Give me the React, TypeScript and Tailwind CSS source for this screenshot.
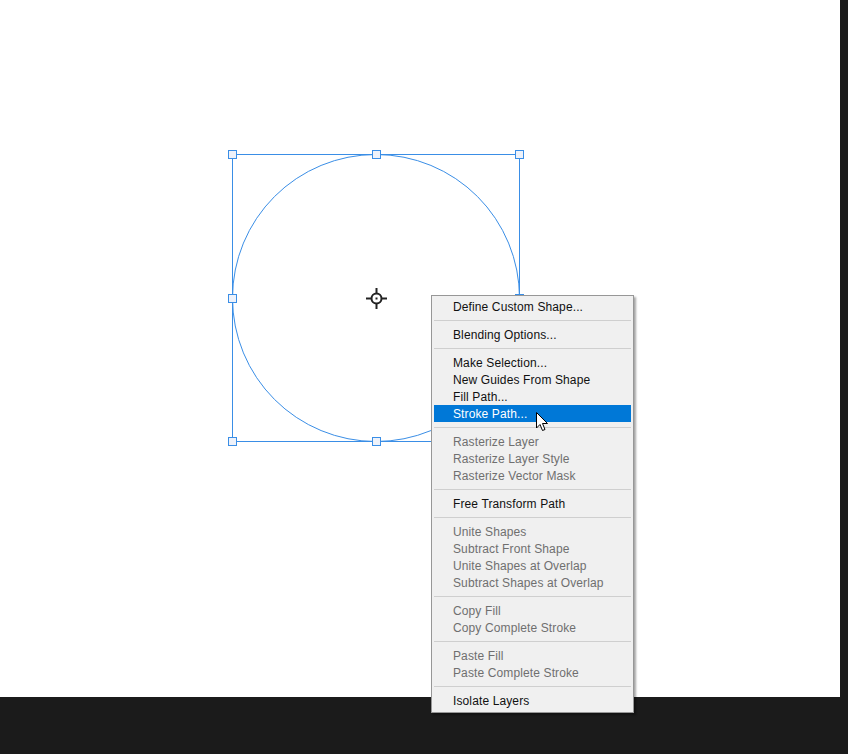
import React from "react";

type Item = { label: string; disabled?: boolean; active?: boolean } | "sep";

const items: Item[] = [
  { label: "Define Custom Shape..." },
  "sep",
  { label: "Blending Options..." },
  "sep",
  { label: "Make Selection..." },
  { label: "New Guides From Shape" },
  { label: "Fill Path..." },
  { label: "Stroke Path...", active: true },
  "sep",
  { label: "Rasterize Layer", disabled: true },
  { label: "Rasterize Layer Style", disabled: true },
  { label: "Rasterize Vector Mask", disabled: true },
  "sep",
  { label: "Free Transform Path" },
  "sep",
  { label: "Unite Shapes", disabled: true },
  { label: "Subtract Front Shape", disabled: true },
  { label: "Unite Shapes at Overlap", disabled: true },
  { label: "Subtract Shapes at Overlap", disabled: true },
  "sep",
  { label: "Copy Fill", disabled: true },
  { label: "Copy Complete Stroke", disabled: true },
  "sep",
  { label: "Paste Fill", disabled: true },
  { label: "Paste Complete Stroke", disabled: true },
  "sep",
  { label: "Isolate Layers" },
];

const handles = [
  [232, 154], [376, 154], [519, 154],
  [232, 298], [519, 298],
  [232, 441], [376, 441], [519, 441],
];

function ShapeLayer() {
  return (
    <svg className="absolute left-0 top-0" width="840" height="697">
      <circle cx="376" cy="298" r="143.5" fill="none" stroke="#3a8ee6" strokeWidth="1" />
      <rect x="232.5" y="154.5" width="287" height="287" fill="none" stroke="#3a8ee6" strokeWidth="1" />
      {handles.map(([x, y], i) => (
        <rect key={i} x={x - 3.5} y={y - 3.5} width="8" height="8" fill="#eef2fa" stroke="#3a8ee6" strokeWidth="1" />
      ))}
      {/* center crosshair */}
      <g stroke="#222" strokeWidth="2" fill="none">
        <circle cx="376.5" cy="298.5" r="5" />
        <line x1="376.5" y1="288" x2="376.5" y2="293" />
        <line x1="376.5" y1="304" x2="376.5" y2="309" />
        <line x1="366" y1="298.5" x2="371" y2="298.5" />
        <line x1="382" y1="298.5" x2="387" y2="298.5" />
      </g>
      <rect x="375.5" y="297.5" width="2" height="2" fill="#222" />
    </svg>
  );
}

function ContextMenu() {
  return (
    <div className="absolute left-[431px] top-[295px] w-[203px] border border-[#979797] bg-[#f0f0f0] pt-[2px] pb-[3px] shadow-[2px_2px_2px_rgba(0,0,0,0.35)] font-['Liberation_Sans',sans-serif] text-[12px] tracking-[0.12px]">
      {items.map((it, i) =>
        it === "sep" ? (
          <div key={i} className="py-[5px] px-[2px]">
            <div className="h-px bg-[#cfcfcf]" />
          </div>
        ) : (
          <div key={i} className="px-[2px]">
            <div
              className={
                "h-[17px] leading-[17px] pl-[19px] whitespace-nowrap " +
                (it.active ? "bg-[#0078d7] text-white" : it.disabled ? "text-[#6f6f6f]" : "text-[#111]")
              }
            >
              <span className="relative top-px">{it.label}</span>
            </div>
          </div>
        )
      )}
    </div>
  );
}

function Cursor() {
  return (
    <svg className="absolute left-[536px] top-[412px]" width="14" height="22" viewBox="0 0 14 22">
      <path d="M0.5 0.5 L0.5 16 L4 12.5 L6.5 18.5 L9 17.5 L6.5 11.5 L11.5 11.5 Z" fill="#fff" stroke="#000" strokeWidth="1" strokeLinejoin="miter" />
    </svg>
  );
}

export default function App() {
  return (
    <div className="w-[848px] h-[754px] bg-[#1b1b1b] overflow-hidden">
      <div className="relative w-[840px] h-[697px] bg-white">
        <ShapeLayer />
      </div>
      <ContextMenu />
      <Cursor />
    </div>
  );
}
